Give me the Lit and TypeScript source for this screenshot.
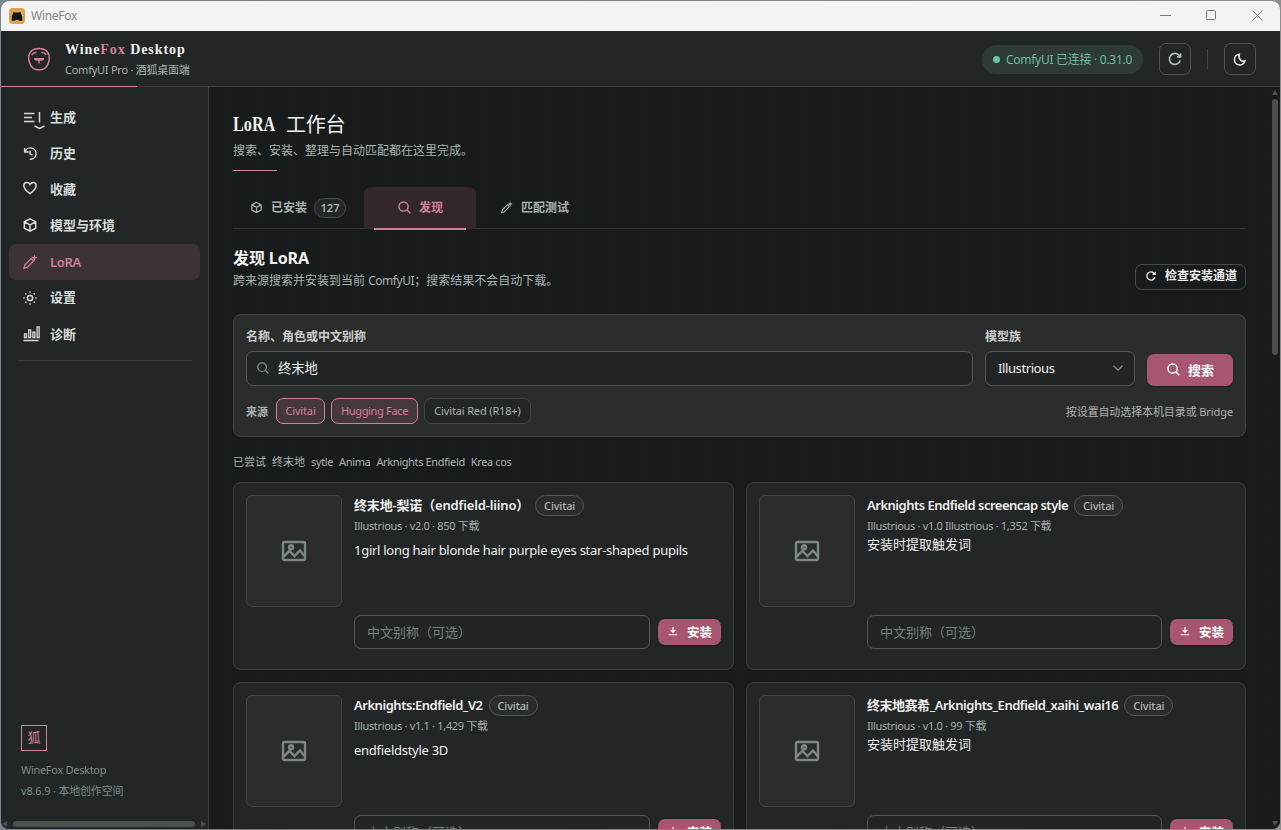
import { LitElement, html, css, svg } from "lit";
import { customElement, property } from "lit/decorators.js";
import { classMap } from "lit/directives/class-map.js";

const icons: Record<string, { box: string; body: unknown }> = {
  generate: {
    box: "0 0 24 20",
    body: svg`<path d="M2 4.500h10.500M2 8.500h8M2 12.500h10.500M17.500 3v10.500M12.500 17l5 2.500l5-2.500"/>`,
  },
  history: {
    box: "0 0 16 16",
    body: svg`<path d="M3 6.800A5.700 5.700 0 1 1 7.800 14.300M2.700 3v3.900h4M8 5.800v3l2.600 1.300"/>`,
  },
  heart: {
    box: "0 0 16 16",
    body: svg`<path d="M8 13.700C4.500 11 1.800 8.600 1.800 5.800c0-3.600 4.600-4.600 6.200-1.300c1.600-3.300 6.200-2.300 6.200 1.300c0 2.800-2.700 5.200-6.200 7.900z"/>`,
  },
  cube: {
    box: "0 0 16 16",
    body: svg`<path d="M8 1.800l5.700 3v6.400L8 14.200l-5.700-3V4.800zM2.300 4.800L8 7.800l5.700-3M8 7.800v6.400"/>`,
  },
  wand: {
    box: "0 0 16 16",
    body: svg`<path stroke-width="1.300" d="M1.900 14.300l1.100-3.500l6.200-6.200l2.400 2.400l-6.200 6.200z"/><path class="solid" d="M12.400 .4l.9 2.300l2.300.9l-2.300 1l-.8 2.800l-1.100-2.700l-2.300-1.100l2.500-.9z"/>`,
  },
  sun: {
    box: "0 0 16 16",
    body: svg`<circle cx="8" cy="8" r="2.600"/><path stroke-linecap="round" d="M8 1.900v.3M8 13.800v.3M1.900 8h.3M13.800 8h.3M3.700 3.700l.2.2M12.100 12.100l.2.2M12.300 3.700l-.2.2M3.900 12.100l-.2.2"/>`,
  },
  bars: {
    box: "0 0 19 17",
    body: svg`<path d="M1.500 15.500h15M2.500 8.800h2v3.700h-2zM6.700 4.800h2v7.700h-2zM10.900 7.200h2v5.300h-2zM15.100 1.800h2v10.700h-2z"/>`,
  },
  search: {
    box: "0 0 16 16",
    body: svg`<circle cx="7" cy="7" r="4.900"/><path d="M10.700 10.700l3.500 3.500"/>`,
  },
  refresh: {
    box: "0 0 16 16",
    body: svg`<path d="M13.200 9.600a5.500 5.500 0 1 1-.8-4.900l1 1M13.600 2.400v3.500h-3.500"/>`,
  },
  moon: {
    box: "0 0 16 16",
    body: svg`<path d="M7.800 2.400a5.700 5.700 0 1 0 6 7.200c-3.700 1.200-7.500-2.700-6-7.200z"/>`,
  },
  download: {
    box: "0 0 16 16",
    body: svg`<path d="M8 2.500v7M4.800 6.600L8 9.800l3.200-3.200M2.200 13h11.600"/>`,
  },
  chevron: { box: "0 0 16 16", body: svg`<path d="M3 5.500l5 5l5-5"/>` },
  image: {
    box: "0 0 26 22",
    body: svg`<rect x="2" y="2" width="22" height="18" rx="1.500"/><circle cx="10" cy="7.200" r="2"/><path d="M2.500 16.500l6-5.500l5 5l5.500-5.500l4.500 5.500"/>`,
  },
  fox: {
    box: "0 0 24 24",
    body: svg`<path d="M5.400 3.200C8 .8 16 .8 18.600 3.200C22 6 23.200 11 21.400 16C19.600 21 15.400 23 12 23S4.400 21 2.600 16C.8 11 2 6 5.400 3.200z"/><path d="M4.800 7.800C6 6 7.500 5.400 9.500 5.600M14.500 5.600C16.500 5.400 18 6 19.200 7.800M7 11.700h10M7.600 12c1.200 1.200 3 1.200 4.400.2c1.400 1 3.200 1 4.400-.2M12 12.500v4"/>`,
  },
};

@customElement("wf-icon")
export class WfIcon extends LitElement {
  static styles = css`
    :host { display: inline-flex; flex: none; width: 16px; height: 16px; }
    svg { width: 100%; height: 100%; fill: none; stroke: currentColor; stroke-width: var(--sw, 1.5); overflow: visible; }
    .solid { fill: currentColor; stroke: none; }
  `;
  @property() name = "cube";
  render() {
    const i = icons[this.name];
    return html`<svg viewBox=${i.box} aria-hidden="true">${i.body}</svg>`;
  }
}

interface Model { title: string; meta: string; text: string; tags: boolean; fit: string }

@customElement("lora-card")
export class LoraCard extends LitElement {
  static styles = css`
    :host { display: block; box-sizing: border-box; height: 188px; padding: 12px; background: #222627; border: 1px solid #3b4040; border-radius: 8px; }
    .top { display: flex; gap: 12px; height: 112px; }
    .thumb { box-sizing: border-box; width: 96px; flex: none; display: flex; align-items: center; justify-content: center; background: #2a2d2c; border: 1px solid #3f4443; border-radius: 6px; color: #7c8884; }
    .thumb wf-icon { width: 26px; height: 22px; --sw: 2.4; }
    .title { display: flex; align-items: flex-start; height: 21px; gap: 6px; font-size: 13px; font-weight: 600; color: #efefed; white-space: nowrap; }
    .title span:first-child { line-height: 20px; }
    .mixed { letter-spacing: -.16px; }
    .latin { letter-spacing: -.5px; }
    .snake { letter-spacing: -.47px; }
    .badge { box-sizing: border-box; height: 21px; line-height: 20px; width: 49px; text-align: center; border: 1px solid #515856; border-radius: 11px; background: #2a2d2c; font-size: 11px; font-weight: 500; letter-spacing: -.15px; color: #aeb6b3; }
    .meta { height: 19px; line-height: 19px; font-size: 11px; color: #a4adaa; white-space: nowrap; letter-spacing: -.32px; }
    .text { font-size: 13px; line-height: 18px; color: #efefed; white-space: nowrap; }
    .tags { padding-top: 6px; letter-spacing: -.27px; }
    .bottom { display: flex; align-items: center; gap: 8px; margin: 8px 0 0 108px; height: 34px; }
    .alias { box-sizing: border-box; flex: 1; height: 34px; line-height: 33px; padding-left: 12px; border: 1px solid #515756; border-radius: 7px; font-size: 13px; color: #76807d; background: #222526; }
    .install { display: flex; align-items: center; box-sizing: border-box; width: 63px; height: 26px; padding: 0 0 2px 9px; gap: 8px; border-radius: 7px; background: #a8566f; color: #fff; font-size: 12.500px; font-weight: 700; box-shadow: 0 1px 2px #0005; }
    .install wf-icon { width: 12px; height: 12px; --sw: 1.6; }
  `;
  @property({ attribute: false }) model!: Model;
  render() {
    const m = this.model;
    return html`
      <div class="top">
        <div class="thumb"><wf-icon name="image"></wf-icon></div>
        <div>
          <div class="title"><span class=${m.fit}>${m.title}</span><span class="badge">Civitai</span></div>
          <div class="meta">${m.meta}</div>
          <div class=${classMap({ text: true, tags: m.tags })}>${m.text}</div>
        </div>
      </div>
      <div class="bottom">
        <div class="alias">中文别称（可选）</div>
        <div class="install"><wf-icon name="download"></wf-icon>安装</div>
      </div>`;
  }
}

const models: Model[] = [
  { title: "终末地-梨诺（endfield-liino）", meta: "Illustrious · v2.0 · 850 下载", text: "1girl long hair blonde hair purple eyes star-shaped pupils", tags: true, fit: "mixed" },
  { title: "Arknights Endfield screencap style", meta: "Illustrious · v1.0 Illustrious · 1,352 下载", text: "安装时提取触发词", tags: false, fit: "latin" },
  { title: "Arknights:Endfield_V2", meta: "Illustrious · v1.1 · 1,429 下载", text: "endfieldstyle 3D", tags: true, fit: "snake" },
  { title: "终末地赛希_Arknights_Endfield_xaihi_wai16", meta: "Illustrious · v1.0 · 99 下载", text: "安装时提取触发词", tags: false, fit: "snake" },
];

const nav = [
  ["generate", "生成"], ["history", "历史"], ["heart", "收藏"], ["cube", "模型与环境"],
  ["wand", "LoRA"], ["sun", "设置"], ["bars", "诊断"],
];

@customElement("app-root")
export class AppRoot extends LitElement {
  static styles = css`
    :host { display: block; box-sizing: border-box; width: 1281px; height: 830px; padding: 1px; overflow: hidden; background: linear-gradient(90deg, #7b8590, #777a7c 20%, #8d8f90); font-family: "Noto Sans", "Noto Sans CJK SC", sans-serif; color: #efefed; }
    * { box-sizing: border-box; }
    .window { display: flex; flex-direction: column; height: 828px; border-radius: 8px; overflow: hidden; background: #171b1b; }
    .titlebar { display: flex; align-items: center; height: 30px; flex: none; padding: 0 17px 0 8px; background: #f3f3f3; color: #858585; font-size: 12px; letter-spacing: -.3px; }
    .name { padding-bottom: 1px; }
    .appicon { width: 16px; height: 16px; margin-right: 6px; }
    .grow { flex: 1; }
    .winbtns { display: flex; gap: 35px; padding-bottom: 1px; }
    .winbtns svg { width: 11px; height: 11px; fill: none; stroke: #777; }
    .header { display: flex; align-items: center; height: 56px; flex: none; padding: 0 24px 0 26px; background: linear-gradient(90deg, #d47f9a 136px, #3b4040 136px) bottom / 100% 1px no-repeat #222627; }
    .logo { width: 24px; height: 24px; margin-right: 14px; color: #d47f9a; --sw: 1.5; }
    .brand { font-family: "Liberation Serif", serif; font-weight: 700; font-size: 14px; line-height: 18px; letter-spacing: .93px; padding-top: 1px; }
    .pink { color: #d47f9a; }
    .sub { font-size: 11px; line-height: 18px; padding-top: 2px; color: #a9b2ae; letter-spacing: -.25px; }
    .status { display: flex; align-items: center; width: 161px; height: 29px; padding-left: 11px; gap: 6px; border-radius: 15px; background: #2d3a37; color: #6fbf9c; font-size: 12px; line-height: 27px; letter-spacing: -.28px; white-space: nowrap; }
    .dot { width: 7px; height: 7px; border-radius: 50%; background: #70c4a0; }
    .square { display: flex; align-items: center; justify-content: center; width: 32px; height: 32px; border: 1px solid #4c5251; border-radius: 7px; color: #b4bbb8; }
    .square.refresh { margin-left: 16px; --sw: 1.7; }
    .square.moon { color: #efefed; }
    .square.moon wf-icon { width: 15px; height: 15px; --sw: 1.6; margin-right: 1px; }
    .rule { width: 1px; height: 20px; margin: 0 16px; background: #3f4544; }
    .body { display: flex; flex: 1; min-height: 0; }
    .side { display: flex; flex-direction: column; width: 208px; flex: none; border-right: 1px solid #3b4040; background: #222627; }
    .nav { display: flex; flex-direction: column; gap: .2px; padding: 12px 8px; }
    .item { display: flex; align-items: center; height: 36px; padding-left: 13px; gap: 11px; border-radius: 7px; font-size: 13px; font-weight: 600; color: #d7dcd9; }
    .item .slot { display: flex; align-items: center; width: 17px; }
    .item .label { padding-bottom: 2px; }
    .item.active .label { padding-bottom: 0; letter-spacing: -.3px; }
    .item.active { background: #3b3337; color: #d27e98; }
    .item .generate { width: 24px; height: 20px; margin-top: 3px; }
    .item .heart { margin-top: -2px; }
    .item .bars { width: 19px; height: 17px; --sw: 1.3; }
    .item .bars, .item .cube { margin-top: -1px; }
    .navline { height: 1px; margin: 8px 8px 0; background: #343939; }
    .seal { display: flex; align-items: center; justify-content: center; width: 26px; height: 26px; margin-left: 20px; border: 1px solid #d47f9a; color: #d47f9a; font-size: 13px; line-height: 20px; padding-bottom: 2px; }
    .foot { margin: 8px 0 18px 20px; font-size: 11px; line-height: 21px; color: #7f8a86; letter-spacing: -.3px; }
    .foot .ver { letter-spacing: -.18px; }
    .hbar { display: flex; align-items: center; height: 10px; padding: 0 2px 0 1px; gap: 5px; flex: none; }
    .hthumb { flex: 1; height: 6px; border-radius: 3px; background: #4d5150; }
    .arrow { width: 6px; height: 6px; fill: #4d5150; flex: none; }
    .main { flex: 1; min-width: 0; overflow: hidden; padding: 24px 24px 0; background: linear-gradient(90deg, #191d1d 1px, transparent 1px) 16px 0 / 32px 32px, linear-gradient(#191d1d 1px, transparent 1px) 0 8px / 32px 32px, #171b1b; }
    .vbar { display: flex; flex-direction: column; align-items: center; width: 10px; padding: 3px 0; gap: 3px; background: #171b1b; }
    .vthumb { width: 6px; height: 256px; border-radius: 3px; background: #4a4d4d; margin-bottom: auto; }
    .h1 { display: flex; font-family: "Liberation Serif", "Noto Sans CJK SC", serif; font-weight: 700; font-size: 20px; line-height: 27px; height: 27px; white-space: pre; }
    .h1 .lat { width: 53px; transform: scaleX(.81); transform-origin: left; }
    .h1 .cjk { font-weight: 400; line-height: 28px; letter-spacing: -.2px; }
    .desc { font-size: 12px; line-height: 25px; height: 24px; color: #a9b2ae; }
    .accent { width: 44px; height: 1px; margin: 8px 0 16px; background: #d47f9a; }
    .tabs { display: flex; height: 42px; border-bottom: 1px solid #303535; font-size: 12px; font-weight: 600; color: #a9b2ae; }
    .tab { display: flex; align-items: center; height: 42px; padding: 0 18px 0 17px; gap: 8px; }
    .tab wf-icon { width: 13px; height: 13px; margin-bottom: 1px; }
    .tab .label { padding-bottom: 2px; }
    .tab .count { width: 32px; height: 20px; margin-left: -1px; line-height: 18px; text-align: center; border: 1px solid #444a49; border-radius: 10px; background: #232727; font-size: 11px; }
    .tab.on { position: relative; width: 112px; padding: 0 0 0 33px; border-radius: 7px 7px 0 0; background: #32282c; color: #d47f9a; }
    .tab.on wf-icon { width: 15px; height: 15px; margin-right: -1px; }
    .tab.on::after { content: ""; position: absolute; left: 10px; right: 10px; bottom: -1px; height: 2px; background: #d47f9a; }
    .tab.test { padding-left: 24px; }
    .section { display: flex; align-items: flex-end; justify-content: space-between; margin-top: 18px; height: 43px; }
    .h2 { font-size: 16px; line-height: 22px; font-weight: 700; color: #f3f3f1; letter-spacing: -.1px; }
    .hint { font-size: 12px; line-height: 18px; margin-top: 3px; color: #a9b2ae; white-space: nowrap; }
    .hint .app { letter-spacing: -.45px; }
    .check { display: flex; align-items: center; width: 111px; height: 26px; padding-left: 9px; gap: 8px; border: 1px solid #454b4a; border-radius: 7px; font-size: 12px; line-height: 22px; padding-bottom: 2px; font-weight: 700; white-space: nowrap; }
    .check wf-icon { width: 12px; height: 12px; --sw: 1.7; }
    .panel { height: 123px; margin-top: 24px; padding: 12px; border: 1px solid #3f4544; border-radius: 8px; background: #2a2d2c; }
    .fields { display: flex; gap: 12px; align-items: flex-end; height: 59px; }
    .field { width: 150px; font-size: 12px; line-height: 20px; font-weight: 600; color: #c9cecb; }
    .field.wide { width: auto; flex: 1; }
    .box { display: flex; align-items: center; height: 35px; margin-top: 4px; padding: 0 9px 1px; gap: 8px; border: 1px solid #515756; border-radius: 7px; background: #222526; color: #efefed; font-size: 13.300px; font-weight: 400; }
    .box wf-icon { width: 14px; height: 14px; color: #858e8b; }
    .box.select { justify-content: space-between; padding-left: 12px; font-size: 13px; letter-spacing: -.4px; }
    .go { display: flex; align-items: center; width: 86px; height: 32px; padding: 0 0 2px 19px; gap: 7px; border-radius: 7px; background: #a8566f; color: #fff; font-size: 13px; font-weight: 700; box-shadow: 0 1px 2px #0005; }
    .go wf-icon { width: 15px; height: 15px; }
    .sources { display: flex; align-items: center; gap: 6px; margin-top: 12px; height: 26px; font-size: 11px; color: #a9b2ae; white-space: nowrap; }
    .sources .label { width: 24px; font-weight: 600; }
    .sources .note { letter-spacing: -.1px; }
    .chip { height: 26px; line-height: 24px; text-align: center; border: 1px solid #3f4544; border-radius: 7px; background: #222627; letter-spacing: -.15px; }
    .chip.sel { border-color: #d47f9a; background: #44383c; color: #d47f9a; }
    .w1 { width: 49px; } .w2 { width: 87px; } .w3 { width: 107px; }
    .chip.w2 { letter-spacing: -.33px; }
    .tried { display: flex; gap: 6px; margin: 16px 0 11px; height: 18px; line-height: 18px; font-size: 11px; color: #a9b2ae; white-space: nowrap; }
    .tried .lat { letter-spacing: -.36px; }
    .grid { display: grid; grid-template-columns: 501px 500px; gap: 12px; }
  `;

  render() {
    return html`
      <div class="window">
        <div class="titlebar">
          <svg class="appicon" viewBox="0 0 16 16"><rect width="16" height="16" rx="3.500" fill="#d9a550"/><path fill="#11131a" d="M2.800 12.800V8.500L4.600 4l2.200.6h2.400l2.200-.6l1.800 4.500v4.300H10l-.7-1H6.700l-.7 1z"/></svg>
          <span class="name">WineFox</span><span class="grow"></span>
          <div class="winbtns">
            <svg viewBox="0 0 11 11"><path d="M0 5.500h11"/></svg>
            <svg viewBox="0 0 11 11"><rect x=".5" y=".5" width="9" height="9" rx="1"/></svg>
            <svg viewBox="0 0 11 11"><path d="M.5 .5l10 10M10.500 .5l-10 10"/></svg>
          </div>
        </div>
        <div class="header">
          <wf-icon class="logo" name="fox"></wf-icon>
          <div class="grow">
            <div class="brand">Wine<span class="pink">Fox</span> Desktop</div>
            <div class="sub">ComfyUI Pro · 酒狐桌面端</div>
          </div>
          <div class="status"><span class="dot"></span>ComfyUI 已连接 · 0.31.0</div>
          <div class="square refresh"><wf-icon name="refresh"></wf-icon></div>
          <span class="rule"></span>
          <div class="square moon"><wf-icon name="moon"></wf-icon></div>
        </div>
        <div class="body">
          <div class="side">
            <div class="nav">
              ${nav.map(([icon, label]) => html`
                <div class=${classMap({ item: true, active: label === "LoRA" })}>
                  <span class="slot"><wf-icon class=${icon} name=${icon}></wf-icon></span><span class="label">${label}</span>
                </div>`)}
              <div class="navline"></div>
            </div>
            <span class="grow"></span>
            <div class="seal">狐</div>
            <div class="foot">WineFox Desktop<br /><span class="ver">v8.6.9 · 本地创作空间</span></div>
            <div class="hbar">
              <svg class="arrow" viewBox="0 0 6 6"><path d="M5 0v6L0 3z"/></svg>
              <span class="hthumb"></span>
              <svg class="arrow" viewBox="0 0 6 6"><path d="M1 0v6l5-3z"/></svg>
            </div>
          </div>
          <div class="main">
            <div class="h1"><span class="lat">LoRA</span><span class="cjk">工作台</span></div>
            <div class="desc">搜索、安装、整理与自动匹配都在这里完成。</div>
            <div class="accent"></div>
            <div class="tabs">
              <div class="tab"><wf-icon name="cube"></wf-icon><span class="label">已安装</span><span class="count">127</span></div>
              <div class="tab on"><wf-icon name="search"></wf-icon><span class="label">发现</span></div>
              <div class="tab test"><wf-icon name="wand"></wf-icon><span class="label">匹配测试</span></div>
            </div>
            <div class="section">
              <div><div class="h2">发现 LoRA</div><div class="hint">跨来源搜索并安装到当前 <span class="app">ComfyUI</span>；搜索结果不会自动下载。</div></div>
              <div class="check"><wf-icon name="refresh"></wf-icon>检查安装通道</div>
            </div>
            <div class="panel">
              <div class="fields">
                <div class="field wide">名称、角色或中文别称<div class="box"><wf-icon name="search"></wf-icon>终末地</div></div>
                <div class="field">模型族<div class="box select">Illustrious<wf-icon name="chevron"></wf-icon></div></div>
                <div class="go"><wf-icon name="search"></wf-icon>搜索</div>
              </div>
              <div class="sources">
                <span class="label">来源</span>
                <span class="chip sel w1">Civitai</span><span class="chip sel w2">Hugging Face</span><span class="chip w3">Civitai Red (R18+)</span>
                <span class="grow"></span><span class="note">按设置自动选择本机目录或 Bridge</span>
              </div>
            </div>
            <div class="tried"><span>已尝试</span><span>终末地</span><span class="lat">sytle</span><span class="lat">Anima</span><span class="lat">Arknights Endfield</span><span class="lat">Krea cos</span></div>
            <div class="grid">${models.map((m) => html`<lora-card .model=${m}></lora-card>`)}</div>
          </div>
          <div class="vbar">
            <svg class="arrow" viewBox="0 0 6 6"><path d="M0 5h6L3 0z"/></svg>
            <span class="vthumb"></span>
            <svg class="arrow" viewBox="0 0 6 6"><path d="M0 1h6L3 6z"/></svg>
          </div>
        </div>
      </div>`;
  }
}
